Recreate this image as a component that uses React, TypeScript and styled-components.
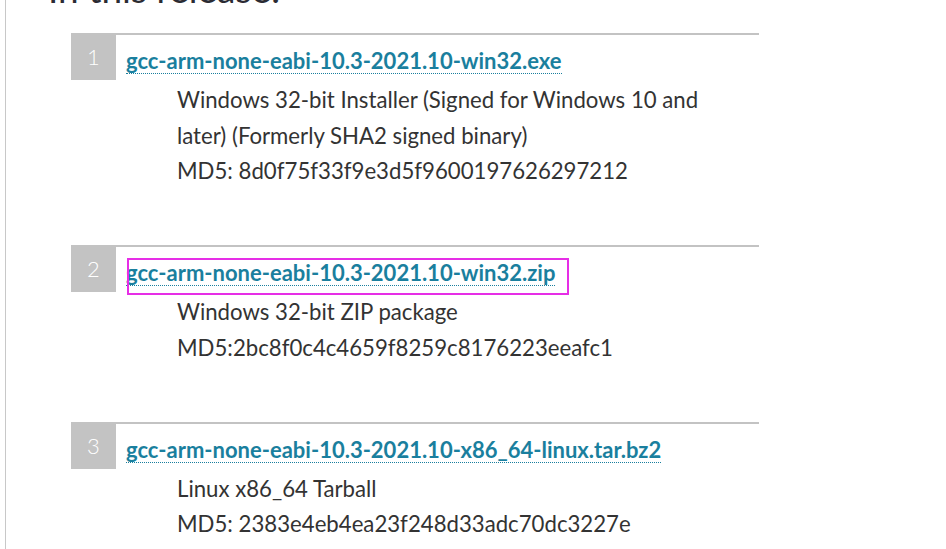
import React from "react";
import styled, { createGlobalStyle } from "styled-components";

const Global = createGlobalStyle`
  html, body { margin: 0; padding: 0; background: #fff; }
  body { font-family: Lato, "Open Sans", sans-serif; color: #333; overflow: hidden; }
`;

const Page = styled.div`
  height: 549px;
  margin-left: 5px;
  border-left: 1px solid #c8c8c8;
  padding-left: 42px;
  overflow: hidden;
`;

const Heading = styled.h2`
  margin: -33px 0 0 0;
  font-size: 37px;
  line-height: 44px;
  font-weight: 400;
  color: #2b2b33;
`;

const List = styled.ol`
  list-style: none;
  margin: 22px 0 0 23px;
  padding: 0;
  width: 688px;
`;

const Item = styled.li`
  border-top: 2px solid #c3c3c3;
  margin-bottom: 56.5px;
`;

const Header = styled.div`
  display: flex;
  align-items: flex-start;
  gap: 10px;
  margin-top: -2px;
`;

const Num = styled.span`
  width: 45px;
  height: 47px;
  background: #c3c3c3;
  color: #fff;
  font-size: 22px;
  font-weight: 300;
  display: flex;
  align-items: center;
  justify-content: center;
  flex: none;
`;

const Link = styled.a<{ $highlight?: boolean }>`
  position: relative;
  color: #1a7f9e;
  font-size: 22px;
  font-weight: 700;
  text-decoration: none;
  border-bottom: 1px dotted #1a7f9e;
  line-height: 24px;
  margin-top: 16px;

  &::after {
    content: "";
    display: ${(p) => (p.$highlight ? "block" : "none")};
    position: absolute;
    left: 1px;
    right: -14px;
    top: -3px;
    bottom: -10px;
    border: 2px solid #e62ee6;
    pointer-events: none;
  }
`;

const Desc = styled.div`
  padding-left: 106px;
  margin-top: 2px;
  font-size: 22.2px;
  line-height: 35.5px;
  color: #333;
`;

const items = [
  {
    n: 1,
    file: "gcc-arm-none-eabi-10.3-2021.10-win32.exe",
    lines: [
      "Windows 32-bit Installer (Signed for Windows 10 and",
      "later) (Formerly SHA2 signed binary)",
      "MD5: 8d0f75f33f9e3d5f9600197626297212",
    ],
  },
  {
    n: 2,
    file: "gcc-arm-none-eabi-10.3-2021.10-win32.zip",
    hl: true,
    lines: ["Windows 32-bit ZIP package", "MD5:2bc8f0c4c4659f8259c8176223eeafc1"],
  },
  {
    n: 3,
    file: "gcc-arm-none-eabi-10.3-2021.10-x86_64-linux.tar.bz2",
    lines: ["Linux x86_64 Tarball", "MD5: 2383e4eb4ea23f248d33adc70dc3227e"],
  },
];

export default function App() {
  return (
    <>
      <Global />
      <Page>
        <Heading>In this release:</Heading>
        <List>
          {items.map((it) => (
            <Item key={it.n}>
              <Header>
                <Num>{it.n}</Num>
                <Link href="#" $highlight={it.hl}>
                  {it.file}
                </Link>
              </Header>
              <Desc>
                {it.lines.map((l) => (
                  <div key={l}>{l}</div>
                ))}
              </Desc>
            </Item>
          ))}
        </List>
      </Page>
    </>
  );
}
